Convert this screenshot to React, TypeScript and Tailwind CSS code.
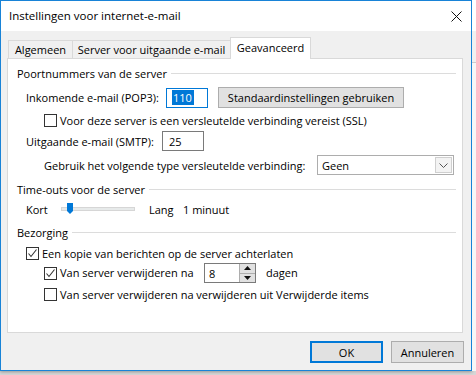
import React from "react";

function Box({ checked }: { checked?: boolean }) {
  return (
    <span className="w-[13px] h-[13px] border border-[#333333] bg-white flex items-center justify-center shrink-0">
      {checked && (
        <svg width="11" height="11" viewBox="0 0 11 11">
          <path d="M1.5 5.5 L4 8.5 L9.5 1.5" stroke="#333333" strokeWidth="1.1" fill="none" />
        </svg>
      )}
    </span>
  );
}

function Header({ text }: { text: string }) {
  return (
    <div className="h-[16px] flex items-center pl-[9px] pr-[6px]">
      <span className="whitespace-nowrap">{text}</span>
      <div className="flex-1 h-px bg-[#dcdcdc] ml-[4px]" />
    </div>
  );
}

export default function App() {
  return (
    <div className="w-[476px] h-[375px] bg-[#d6d6d6] flex overflow-hidden font-['Open_Sans',sans-serif] text-[11px] text-black leading-none">
      <div className="w-[472px] h-[371px] shrink-0 border border-[#1883d7] bg-[#f0f0f0] flex flex-col shadow-[0_1px_3px_rgba(0,0,0,0.3)]">
        {/* title bar */}
        <div className="h-[30px] bg-white flex items-center pl-[8px] pr-[9px] shrink-0">
          <span className="text-[11.5px] flex-1">Instellingen voor internet-e-mail</span>
          <svg width="11" height="11" viewBox="0 0 11 11">
            <path d="M0.5 0.5 L10.5 10.5 M10.5 0.5 L0.5 10.5" stroke="#111" strokeWidth="1" />
          </svg>
        </div>
        {/* tabs */}
        <div className="mt-[6px] h-[21px] pl-[7px] flex items-end relative z-10">
          <div className="w-[65px] h-[18px] border-l border-t border-r border-[#d9d9d9] flex items-center justify-center">
            Algemeen
          </div>
          <div className="w-[158px] h-[18px] border-t border-r border-[#d9d9d9] flex items-center justify-center">
            Server voor uitgaande e-mail
          </div>
          <div className="-ml-px w-[81px] h-[22px] -mb-px bg-white border-l border-t border-r border-[#d9d9d9] flex items-center justify-center pb-[2px]">
            Geavanceerd
          </div>
        </div>
        {/* panel */}
        <div className="ml-[6px] w-[456px] h-[275px] border border-[#d9d9d9] bg-white pt-[6px] flex flex-col shrink-0">
          <Header text="Poortnummers van de server" />
          <div className="mt-[6px] h-[21px] flex items-center pl-[18px]">
            <span className="w-[140px] whitespace-nowrap">Inkomende e-mail (POP3):</span>
            <div className="w-[42px] h-[20px] border border-[#0078d7] flex items-center pl-[5px]">
              <span className="bg-[#0078d7] text-white h-[15px] flex items-center pl-px pr-[2px]">110</span>
            </div>
            <div className="ml-[10px] w-[186px] h-[21px] bg-[#e1e1e1] border border-[#adadad] flex items-center justify-center">
              Standaardinstellingen gebruiken
            </div>
          </div>
          <div className="mt-[4px] h-[16px] flex items-center pl-[36px] gap-[3px]">
            <Box />
            <span className="whitespace-nowrap">Voor deze server is een versleutelde verbinding vereist (SSL)</span>
          </div>
          <div className="mt-[3px] h-[20px] flex items-center pl-[18px]">
            <span className="w-[136px] whitespace-nowrap">Uitgaande e-mail (SMTP):</span>
            <div className="w-[42px] h-[20px] border border-[#7a7a7a] flex items-center pl-[6px]">25</div>
          </div>
          <div className="mt-[4px] h-[20px] flex items-center pl-[36px]">
            <span className="w-[273px] whitespace-nowrap">Gebruik het volgende type versleutelde verbinding:</span>
            <div className="w-[137px] h-[20px] border border-[#adadad] flex items-center pl-[4px] pr-[1px]">
              <span className="flex-1">Geen</span>
              <div className="w-[17px] h-[16px] border border-[#cfcfcf] bg-[#f3f3f3] flex items-center justify-center">
                <svg width="9" height="5" viewBox="0 0 9 5">
                  <path d="M0.5 0.5 L4.5 4.5 L8.5 0.5" stroke="#555" strokeWidth="1" fill="none" />
                </svg>
              </div>
            </div>
          </div>
          <div className="mt-[6px]">
            <Header text="Time-outs voor de server" />
          </div>
          <div className="mt-[4px] h-[16px] flex items-center pl-[18px]">
            <span className="w-[35px]">Kort</span>
            <div className="w-[74px] h-[4px] bg-[#e7eaea] border border-[#d6d6d6] relative">
              <svg className="absolute left-[5px] top-[-5px]" width="6" height="11" viewBox="0 0 6 11">
                <path d="M0 0 H6 V8 L3 11 L0 8 Z" fill="#0078d7" />
              </svg>
            </div>
            <span className="ml-[14px] w-[34px]">Lang</span>
            <span>1 minuut</span>
          </div>
          <div className="mt-[7px]">
            <Header text="Bezorging" />
          </div>
          <div className="mt-[5px] h-[16px] flex items-center pl-[18px] gap-[3px]">
            <Box checked />
            <span className="whitespace-nowrap">Een kopie van berichten op de server achterlaten</span>
          </div>
          <div className="mt-[2px] h-[20px] flex items-center pl-[36px]">
            <Box checked />
            <span className="ml-[3px] w-[144px] whitespace-nowrap pb-[2px]">Van server verwijderen na</span>
            <div className="w-[52px] h-[20px] border border-[#7a7a7a] flex">
              <div className="flex-1 flex items-center pl-[4px]">8</div>
              <div className="w-[16px] flex flex-col">
                <div className="flex-1 bg-[#e1e1e1] border-l border-b border-[#adadad] flex items-center justify-center">
                  <svg width="7" height="4" viewBox="0 0 7 4"><path d="M0 4 L3.5 0 L7 4 Z" fill="#111" /></svg>
                </div>
                <div className="flex-1 bg-[#e1e1e1] border-l border-[#adadad] flex items-center justify-center">
                  <svg width="7" height="4" viewBox="0 0 7 4"><path d="M0 0 L3.5 4 L7 0 Z" fill="#111" /></svg>
                </div>
              </div>
            </div>
            <span className="ml-[10px] pb-[2px]">dagen</span>
          </div>
          <div className="mt-[3px] h-[16px] flex items-center pl-[36px] gap-[3px]">
            <Box />
            <span className="whitespace-nowrap">Van server verwijderen na verwijderen uit Verwijderde items</span>
          </div>
        </div>
        {/* buttons */}
        <div className="mt-[8px] flex justify-end gap-[8px] pr-[7px]">
          <div className="w-[73px] h-[22px] bg-[#e1e1e1] border-2 border-[#0078d7] flex items-center justify-center">OK</div>
          <div className="w-[73px] h-[22px] bg-[#e1e1e1] border border-[#adadad] flex items-center justify-center">Annuleren</div>
        </div>
      </div>
      <div className="flex-1 h-[371px] flex flex-col">
        <div className="h-[31px] bg-white" />
        <div className="h-[31px] bg-[#f0f0f0]" />
        <div className="flex-1 bg-[#f7f7f7] border-t border-[#cccccc]" />
      </div>
    </div>
  );
}
